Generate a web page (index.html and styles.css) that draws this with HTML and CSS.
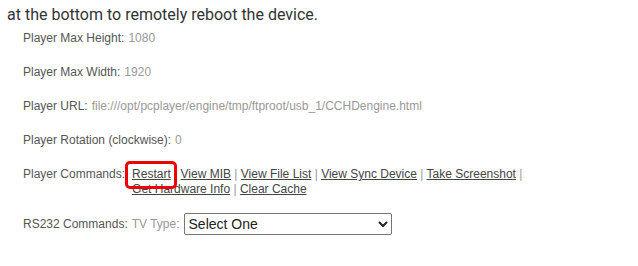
FILE: index.html
```html
<!DOCTYPE html>
<html>
<head>
<meta charset="utf-8">
<link rel="stylesheet" href="styles.css">
</head>
<body>
<p class="intro">at the bottom to remotely reboot the device.</p>
<div class="rows">
  <div class="row"><span class="label">Player Max Height:</span><span class="value">1080</span></div>
  <div class="row"><span class="label">Player Max Width:</span><span class="value">1920</span></div>
  <div class="row"><span class="label">Player URL:</span><span class="value">file:///opt/pcplayer/engine/tmp/ftproot/usb_1/CCHDengine.html</span></div>
  <div class="row"><span class="label">Player Rotation (clockwise):</span><span class="value">0</span></div>
  <div class="row"><span class="label">Player Commands:</span><span class="links"><a href="#" class="hl">Restart</a> <span class="sep">|</span> <a href="#">View MIB</a> <span class="sep">|</span> <a href="#">View File List</a> <span class="sep">|</span> <a href="#">View Sync Device</a> <span class="sep">|</span> <a href="#">Take Screenshot</a> <span class="sep">|</span> <a href="#">Get Hardware Info</a> <span class="sep">|</span> <a href="#">Clear Cache</a></span></div>
  <div class="row center"><span class="label">RS232 Commands:</span><span class="value">TV Type:</span><select class="sel"><option>Select One</option></select></div>
</div>
</body>
</html>
```
FILE: styles.css
```css
body { margin: 0; background: #fff; }
.intro { margin: 0; padding: 5px 0 0 7px; font-family: Roboto, sans-serif; font-size: 16px; line-height: 20px; color: #333; }
.rows { padding-left: 23px; display: flex; flex-direction: column; gap: 19px; margin-top: 6px; font-family: "Liberation Sans", Arial, sans-serif; font-size: 12px; line-height: 15px; }
.row { display: flex; gap: 4px; align-items: flex-start; }
.row.center { align-items: center; margin-top: -3px; }
.label { color: #555; }
.value { color: #999; }
.links { color: #999; width: 400px; margin-left: 3px; }
.links a { color: #444; text-decoration: underline; }
.hl { position: relative; }
.hl::after { content: ""; position: absolute; left: -7px; right: -6px; top: -6px; bottom: -8px; border: 3px solid #e00; border-radius: 5px; pointer-events: none; }
.sel { width: 208px; height: 22px; font-family: "Liberation Sans", Arial, sans-serif; font-size: 14px; color: #222; border: 1px solid #767676; border-radius: 2px; background: #fff; margin-left: 0; }
```
